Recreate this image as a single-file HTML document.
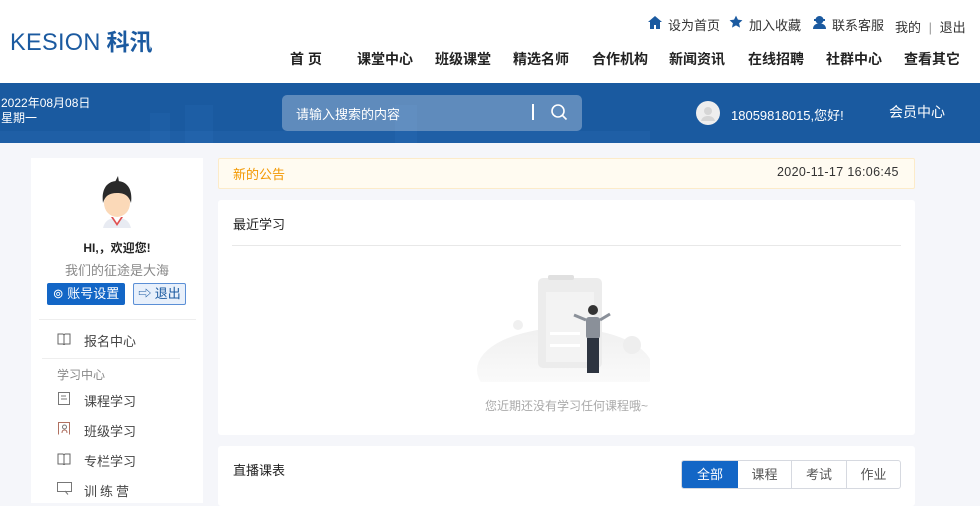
<!DOCTYPE html>
<html><head><meta charset="utf-8"><style>
*{margin:0;padding:0;box-sizing:border-box}
body{width:980px;height:503px;overflow:hidden;background:#f5f6fa;font-family:"Liberation Sans","Noto Sans CJK SC",sans-serif;position:relative;color:#333}
.abs{position:absolute}
.hdr{left:0;top:0;width:980px;height:83px;background:#fff}
.logo{left:10px;top:23px;font-size:24px;color:#1b5aa0;white-space:nowrap}
.logo span{display:inline-block;transform:scaleX(0.98);transform-origin:left;letter-spacing:0.3px;font-weight:normal}
.logo b{font-weight:bold;font-size:23px;margin-left:4px}
.top{top:15px;font-size:13px;color:#333;white-space:nowrap}
.nav{top:49px;font-size:14px;font-weight:bold;color:#222;white-space:nowrap}
.band{left:0;top:83px;width:980px;height:60px;background:#1a5aa0;overflow:hidden}
.side{left:31px;top:158px;width:172px;height:345px;background:#fff}
.panel{background:#fff;border-radius:3px}
.it{left:84px;font-size:13px;color:#444}
</style></head><body>
<div class="abs hdr"></div>
<div class="abs logo"><span>KESION</span><b>科汛</b></div>
<svg class="abs" style="left:648px;top:16px" width="14" height="13" viewBox="0 0 14 13"><path d="M7 0L0 6h2v7h4V9h2v4h4V6h2z" fill="#1b5aa0"/></svg>
<div class="abs top" style="left:668px">设为首页</div>
<svg class="abs" style="left:729px;top:15px" width="14" height="14" viewBox="0 0 24 24"><path d="M12 1l3.3 7 7.7.9-5.7 5.2 1.6 7.6L12 17.8 5.1 21.7l1.6-7.6L1 8.9 8.7 8z" fill="#1b5aa0"/></svg>
<div class="abs top" style="left:749px">加入收藏</div>
<svg class="abs" style="left:812px;top:15px" width="15" height="14" viewBox="0 0 15 14"><circle cx="7.5" cy="5" r="4" fill="#1b5aa0"/><path d="M1 14c0-4 3-5.5 6.5-5.5S14 10 14 14z" fill="#1b5aa0"/><rect x="2" y="4" width="11" height="2" fill="#1b5aa0"/></svg>
<div class="abs top" style="left:832px">联系客服</div>
<div class="abs top" style="left:895px;top:17px">我的 <span style="color:#999;margin:0 4px">|</span> 退出</div>
<div class="abs nav" style="left:290px">首 页</div>
<div class="abs nav" style="left:357px">课堂中心</div>
<div class="abs nav" style="left:435px">班级课堂</div>
<div class="abs nav" style="left:513px">精选名师</div>
<div class="abs nav" style="left:592px">合作机构</div>
<div class="abs nav" style="left:669px">新闻资讯</div>
<div class="abs nav" style="left:748px">在线招聘</div>
<div class="abs nav" style="left:826px">社群中心</div>
<div class="abs nav" style="left:904px">查看其它</div>
<div class="abs band">
 <div class="abs" style="left:150px;top:30px;width:20px;height:30px;background:rgba(80,150,230,.08)"></div>
 <div class="abs" style="left:185px;top:22px;width:28px;height:38px;background:rgba(80,150,230,.08)"></div>
 <div class="abs" style="left:395px;top:22px;width:22px;height:38px;background:rgba(80,150,230,.08)"></div>
 <div class="abs" style="left:0;top:48px;width:650px;height:12px;background:rgba(80,150,230,.1)"></div>
</div>
<div class="abs" style="left:1px;top:96px;color:#fff;font-size:12px;line-height:15px">2022年08月08日<br>星期一</div>
<div class="abs" style="left:282px;top:95px;width:300px;height:36px;border-radius:5px;background:rgba(255,255,255,.3)"></div>
<div class="abs" style="left:296px;top:104px;color:#fff;font-size:13px">请输入搜索的内容</div>
<div class="abs" style="left:532px;top:104px;width:2px;height:16px;background:#fff"></div>
<svg class="abs" style="left:550px;top:103px" width="18" height="18" viewBox="0 0 18 18"><circle cx="8" cy="8" r="6" fill="none" stroke="#fff" stroke-width="1.6"/><path d="M12.5 12.5l4 4" stroke="#fff" stroke-width="1.6"/></svg>
<svg class="abs" style="left:696px;top:101px" width="24" height="24" viewBox="0 0 24 24"><circle cx="12" cy="12" r="12" fill="#eee"/><circle cx="12" cy="10" r="4" fill="#d6d6d6"/><path d="M5 20c1-4 4-5 7-5s6 1 7 5z" fill="#d6d6d6"/></svg>
<div class="abs" style="left:731px;top:105px;color:#fff;font-size:13px">18059818015,您好!</div>
<div class="abs" style="left:889px;top:102px;color:#fff;font-size:14px">会员中心</div>

<div class="abs side"></div>
<svg class="abs" style="left:95px;top:174px" width="44" height="54" viewBox="0 0 44 54"><path d="M8 54c2-8 7-10 14-10s12 2 14 10z" fill="#e8ebf2"/><path d="M16 43l6 9 6-9z" fill="#e05050"/><path d="M18 43l4 6 4-6z" fill="#fff"/><ellipse cx="22" cy="29" rx="13" ry="14" fill="#fbd9b8"/><path d="M8 29C6 14 13 7 22 7s16 7 14 22c-2-7-6-10-14-10S10 22 8 29z" fill="#2a2a2a"/><path d="M20 8l3-6 1 6z" fill="#2a2a2a"/></svg>
<div class="abs" style="left:31px;width:172px;top:239px;text-align:center;font-size:12px;font-weight:bold;color:#222">HI,，欢迎您!</div>
<div class="abs" style="left:31px;width:172px;top:260px;text-align:center;font-size:13px;color:#888">我们的征途是大海</div>
<div class="abs" style="left:47px;top:283px;width:78px;height:22px;background:#1366c6;border-radius:2px;color:#fff;font-size:13px;line-height:22px;text-align:center">⊚ 账号设置</div>
<div class="abs" style="left:133px;top:283px;width:53px;height:22px;background:#e8f0fb;border:1px solid #5b8fd6;border-radius:2px;color:#1b5aa0;font-size:13px;line-height:20px;text-align:center">⇨ 退出</div>
<div class="abs" style="left:39px;top:319px;width:157px;height:1px;background:#eee"></div>
<div class="abs" style="left:42px;top:358px;width:138px;height:1px;background:#eee"></div>
<div class="abs" style="left:57px;top:366px;font-size:12px;color:#888">学习中心</div>
<svg class="abs" style="left:57px;top:333px" width="14" height="12" viewBox="0 0 14 12"><path d="M1 1h5l1 1 1-1h5v10H8l-1 1-1-1H1zM7 2v9" fill="none" stroke="#666"/></svg>
<div class="abs it" style="top:331px">报名中心</div>
<svg class="abs" style="left:58px;top:392px" width="12" height="13" viewBox="0 0 12 13"><path d="M.5.5h11v12H.5zM3 4h5M3 7h6" fill="none" stroke="#777"/></svg>
<div class="abs it" style="top:391px">课程学习</div>
<svg class="abs" style="left:58px;top:422px" width="12" height="13" viewBox="0 0 12 13"><path d="M.5 12.5V.5h11v12M4 11c0-2 1-3 2.5-3S9 9 9 11" fill="none" stroke="#b07060"/><circle cx="6.5" cy="5" r="2" fill="none" stroke="#777"/></svg>
<div class="abs it" style="top:421px">班级学习</div>
<svg class="abs" style="left:57px;top:453px" width="14" height="12" viewBox="0 0 14 12"><path d="M1 1h5l1 1 1-1h5v10H8l-1 1-1-1H1zM7 2v9" fill="none" stroke="#666"/></svg>
<div class="abs it" style="top:451px">专栏学习</div>
<svg class="abs" style="left:57px;top:482px" width="15" height="13" viewBox="0 0 15 13"><path d="M.5.5h14v9H.5zM8 9l3 3.5" fill="none" stroke="#777"/></svg>
<div class="abs it" style="top:481px;letter-spacing:3px">训练营</div>

<div class="abs" style="left:218px;top:158px;width:697px;height:31px;background:#fffbf1;border:1px solid #fcebc9;border-radius:2px"></div>
<div class="abs" style="left:233px;top:164px;font-size:13px;color:#f39800">新的公告</div>
<div class="abs" style="left:777px;top:165px;font-size:12.5px;color:#333;letter-spacing:0.35px">2020-11-17 16:06:45</div>

<div class="abs panel" style="left:218px;top:200px;width:697px;height:235px"></div>
<div class="abs" style="left:233px;top:214px;font-size:13px;color:#222">最近学习</div>
<div class="abs" style="left:232px;top:245px;width:669px;height:1px;background:#e8e8e8"></div>
<svg class="abs" style="left:470px;top:270px" width="180" height="112" viewBox="0 0 180 112"><defs><linearGradient id="g" x1="0" y1="0" x2="0" y2="1"><stop offset="0" stop-color="#f0f0f0"/><stop offset="1" stop-color="#fff"/></linearGradient></defs><ellipse cx="95" cy="100" rx="88" ry="42" fill="url(#g)"/><rect x="68" y="8" width="64" height="90" rx="5" fill="#ececec"/><rect x="78" y="5" width="26" height="5" rx="2" fill="#e0e0e0"/><rect x="76" y="22" width="48" height="70" fill="#f3f3f3"/><rect x="80" y="62" width="30" height="3" fill="#fff"/><rect x="80" y="74" width="30" height="3" fill="#fff"/><circle cx="48" cy="55" r="5" fill="#f0f0f0"/><circle cx="162" cy="75" r="9" fill="#eee"/><circle cx="123" cy="40" r="5" fill="#333"/><rect x="116" y="47" width="14" height="22" rx="3" fill="#8a9099"/><path d="M116 50l-12-5M130 50l10-6" stroke="#8a9099" stroke-width="3"/><rect x="117" y="68" width="12" height="35" fill="#2d3440"/></svg>
<div class="abs" style="left:218px;width:697px;top:397px;text-align:center;font-size:12px;color:#aaa">您近期还没有学习任何课程哦~</div>

<div class="abs panel" style="left:218px;top:446px;width:697px;height:60px"></div>
<div class="abs" style="left:233px;top:460px;font-size:13px;color:#222">直播课表</div>
<div class="abs" style="left:681px;top:460px;width:220px;height:29px;border:1px solid #d6d9e0;border-radius:3px;background:#fff;display:flex;font-size:13px;color:#555;overflow:hidden">
<div style="width:56px;background:#1366c6;color:#fff;text-align:center;line-height:27px">全部</div>
<div style="width:54px;border-right:1px solid #d6d9e0;text-align:center;line-height:27px">课程</div>
<div style="width:55px;border-right:1px solid #d6d9e0;text-align:center;line-height:27px">考试</div>
<div style="flex:1;text-align:center;line-height:27px">作业</div>
</div>
</body></html>
